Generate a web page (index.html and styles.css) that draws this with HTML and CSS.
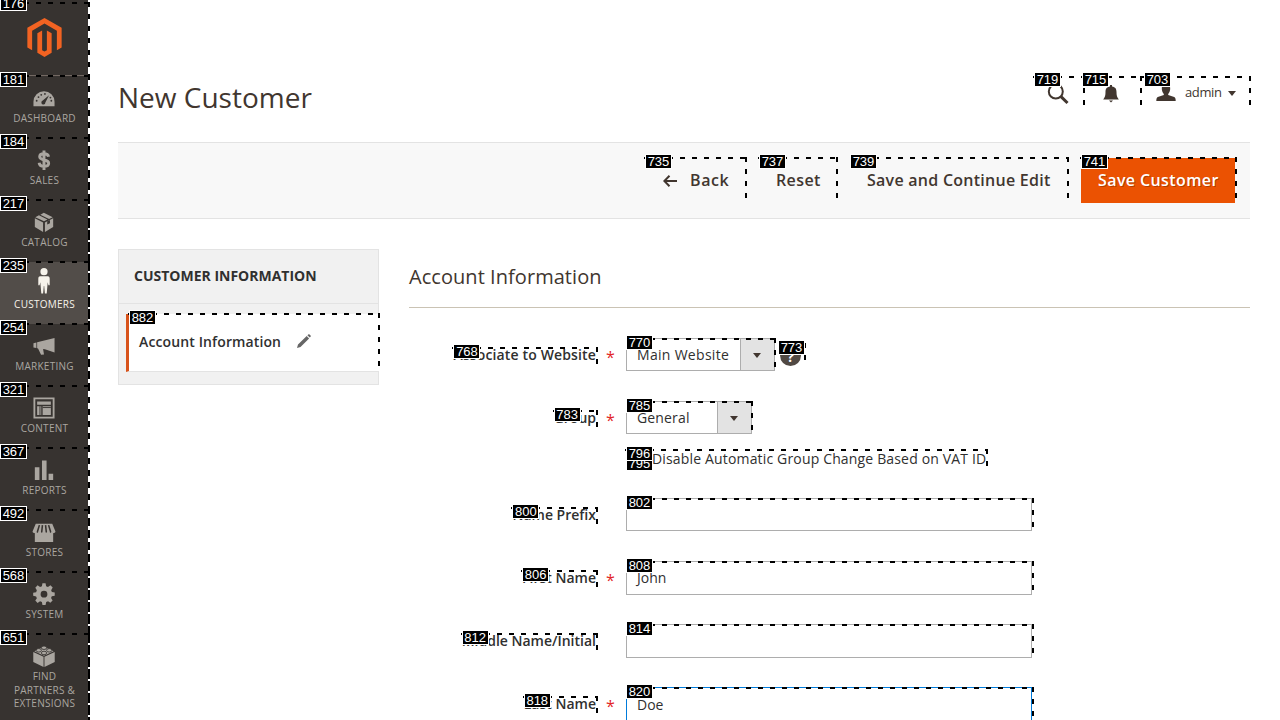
FILE: index.html
```html
<!DOCTYPE html>
<html lang="en">
<head>
<meta charset="utf-8">
<title>New Customer</title>
<link rel="stylesheet" href="styles.css">
</head>
<body>
<div class="page">
<nav class="sidebar mark">
  <span class="tag">176</span>
  <a class="logo"><svg width="35" height="40" viewBox="0 0 36 42"><path fill="#f26322" d="M18 0 36 10.3V30.900l-5 2.900V13.300L18 5.900 5 13.300v20.500L0 30.900V10.300zM10.500 16l5-2.800v20.600l2.500 1.400 2.500-1.400V13.200l5 2.800v20.500L18 41l-7.500-4.500z"/></svg></a>
  <a class="item first mark"><span class="tag">181</span>
    <svg viewBox="0 0 24 24"><path d="M.5 21V16a11.500 11.500 0 0 1 23 0v5z"/><g fill="#373330"><circle cx="4" cy="15" r="1"/><circle cx="6" cy="11" r="1"/><circle cx="9" cy="8.500" r="1"/><circle cx="13" cy="7.500" r="1"/><circle cx="20" cy="15" r="1"/><circle cx="19" cy="11.500" r="1"/><path d="M17.500 9 13.500 16.800a2.200 2.200 0 1 1-2.900-2z"/></g></svg>
    <span>Dashboard</span></a>
  <a class="item mark"><span class="tag">184</span>
    <svg viewBox="0 0 24 24"><path fill="none" stroke="currentColor" stroke-width="3.200" d="M17 8.500C16.500 6 14.500 5.200 12 5.200 9 5.200 7.300 6.300 7.300 8.500c0 4.700 9.800 2.300 9.800 7 0 2.200-2 3.400-5.100 3.400-3 0-5-1.300-5.300-3.900M12 1.500v21.500"/></svg>
    <span>Sales</span></a>
  <a class="item mark"><span class="tag">217</span>
    <svg viewBox="0 0 24 24"><path d="M2 8l9 4.500v10.500L2 17.500zM22 8l-9 4.500v10.500l9-5.500zM2.500 6.800 6.500 4.700l9.300 4.500L12 11.200zM8 4l3.800-2 9.700 4.800-4 1.900z"/><path fill="#373330" d="M15.500 11.300l3-1.500v3.500l-3 1.500z"/></svg>
    <span>Catalog</span></a>
  <a class="item active mark"><span class="tag">235</span>
    <svg class="person" viewBox="0 0 24 26"><circle cx="12" cy="3.700" r="3.600"/><path d="M8.300 8.200h7.400c1.700 0 2 1.200 2 2.700v6.300h-1.300l-.7-3-1 11.300h-1.800L12.200 18h-.4l-.7 7.500H9.300l-1-11.300-.7 3H6.300v-6.300c0-1.500.3-2.700 2-2.700z"/></svg>
    <span>Customers</span></a>
  <a class="item mark"><span class="tag">254</span>
    <svg viewBox="0 0 24 24"><path d="M.5 9l3.200-.8v6L.5 13.500zM4.500 8l19-4.800v15.800L13 15.500l-2-.3 1 6-3.200.3L5.500 14.700l-1-.3z"/></svg>
    <span>Marketing</span></a>
  <a class="item mark"><span class="tag">321</span>
    <svg viewBox="0 0 24 24"><path fill-rule="evenodd" d="M.5.500h23v23H.5zM2.500 2.500v19h19v-19zM4.500 4.800h15v3.700h-15zM4.500 10H9v9.500H4.500zM10.500 10h9v9.500h-9z"/><path stroke="#373330" d="M7.600 10v10M10.500 11.500h9"/></svg>
    <span>Content</span></a>
  <a class="item mark"><span class="tag">367</span>
    <svg viewBox="0 0 24 24"><path d="M2 9h5v14H2zM9.800 1.500h5V23h-5zM17 16h5v7h-5z"/></svg>
    <span>Reports</span></a>
  <a class="item mark"><span class="tag">492</span>
    <svg viewBox="0 0 24 24"><path d="M2 13h20v10H2zM3 3h18l3.500 8.500c0 2-4.300 2.500-5.200.5-.9 2-4.300 2-4.900 0-.6 2-4.200 2-4.800 0-.6 2-4 2-4.900 0-.9 2-5.200 1.500-5.200-.5z"/><path fill="none" stroke="#373330" stroke-width="1.700" d="M7 4.500 4.700 12M10.300 4.500 9.500 12M13.700 4.500l.8 7.500M17 4.500l2.300 7.500"/></svg>
    <span>Stores</span></a>
  <a class="item mark"><span class="tag">568</span>
    <svg viewBox="0 0 24 24"><path fill-rule="evenodd" d="M10.300.3h3.400l.6 3.200 2 .8L19 2.500l2.500 2.500-1.700 2.800.8 1.900 3.100.6v3.600l-3.200.6-.8 1.900 1.700 2.700-2.500 2.500-2.500-1.700-2 .8-.7 3.300h-3.400l-.6-3.200-2-.8L5 21.700l-2.500-2.500 1.700-2.700-.8-1.900-3.200-.6v-3.400l3.200-.6.8-2-1.700-2.700L5 2.500l2.700 1.800 2-.8zM12 8.500a3.700 3.700 0 1 0 0 7.400 3.700 3.700 0 0 0 0-7.400z"/></svg>
    <span>System</span></a>
  <a class="item last mark"><span class="tag">651</span>
    <svg viewBox="0 0 24 24"><path d="M.3 7.500l11.200 5.300V24L.3 18.500zM23.700 7.500l-11.200 5.300V24l11.200-5.500zM1.500 6.700l10.500-5 10.500 5L12 11.800z"/><g stroke="#373330" stroke-width=".9"><ellipse cx="12" cy="3" rx="2.900" ry="1.900"/><ellipse cx="6.300" cy="5.800" rx="2.900" ry="1.900"/><ellipse cx="17.700" cy="5.800" rx="2.900" ry="1.900"/><ellipse cx="12" cy="8.700" rx="2.900" ry="1.900"/></g></svg>
    <span>Find<br>Partners &amp;<br>Extensions</span></a>
</nav>
<main class="main">
  <header class="header">
    <h1>New Customer</h1>
    <div class="tools">
      <a class="tool search mark"><span class="tag">719</span><svg width="22" height="22" viewBox="0 0 22 22"><circle cx="8.800" cy="8.500" r="7" fill="none" stroke="#41362f" stroke-width="2"/><path stroke="#41362f" stroke-width="3" d="M14 13.700 20.500 20"/></svg></a>
      <a class="tool bell mark"><span class="tag">715</span><svg width="16" height="18" viewBox="0 0 16 18"><path fill="#41362f" d="M7 0h2v1.500c3.500.5 4.500 2.500 4.500 5.500 0 3.500.5 5 2.300 7.500H.2C2 12 2.500 10.500 2.500 7c0-3 1-5 4.500-5.500zM6 15.500h4L8 17.500z"/></svg></a>
      <a class="tool user mark"><span class="tag">703</span><svg width="20" height="18" viewBox="0 0 20 18"><path fill="#41362f" d="M10 0c3 0 4.500 2 4.200 5-.2 2.300-1 4-2 5v1l6 2c1 .4 1.500 1.500 1.500 4H.3c0-2.500.5-3.600 1.500-4l6-2V10c-1-1-1.800-2.700-2-5C5.500 2 7 0 10 0z"/></svg><span class="name">admin</span><i class="caret"></i></a>
    </div>
  </header>
  <div class="actions">
    <a class="btn back mark"><span class="tag">735</span><svg width="14" height="12" viewBox="0 0 14 12"><path fill="none" stroke="#41362f" stroke-width="2" d="M14 6H1.500M6.500.8 1.300 6l5.200 5.200"/></svg>Back</a>
    <a class="btn reset mark"><span class="tag">737</span>Reset</a>
    <a class="btn cont mark"><span class="tag">739</span>Save and Continue Edit</a>
    <a class="btn primary mark"><span class="tag">741</span>Save Customer</a>
  </div>
  <div class="columns">
    <aside class="panel">
      <h2>CUSTOMER INFORMATION</h2>
      <a class="tab mark"><span class="tag">882</span>Account Information
        <svg width="14" height="14" viewBox="0 0 14 14"><path fill="#666" d="M0 14l1-3.500L9.700 2l2.400 2.400L3.500 13zM10.400 1.300l.9-.9c.4-.3.900-.3 1.200 0l1.100 1.100c.3.400.3.800 0 1.200l-.9.9z"/></svg></a>
    </aside>
    <section class="form">
      <h2>Account Information</h2>
      <div class="field"><div class="label"><span class="mark wide">Associate to Website<span class="tag">768</span></span></div><b class="req">*</b>
        <div class="select site mark"><span class="tag">770</span><span class="value">Main Website</span><span class="drop"><i class="caret"></i></span></div>
        <div class="help mark"><span class="tag">773</span><i>?</i></div></div>
      <div class="field"><div class="label"><span class="mark">Group<span class="tag">783</span></span></div><b class="req">*</b>
        <div class="select group mark"><span class="tag">785</span><span class="value">General</span><span class="drop"><i class="caret"></i></span></div></div>
      <div class="check"><span class="tag under">795</span><div class="checklabel mark"><span class="tag">796</span>Disable Automatic Group Change Based on VAT ID</div></div>
      <div class="field"><div class="label"><span class="mark">Name Prefix<span class="tag">800</span></span></div><b class="req"></b><div class="input mark"><span class="tag">802</span></div></div>
      <div class="field"><div class="label"><span class="mark">First Name<span class="tag">806</span></span></div><b class="req">*</b><div class="input tall mark"><span class="tag">808</span>John</div></div>
      <div class="field"><div class="label"><span class="mark">Middle Name/Initial<span class="tag">812</span></span></div><b class="req"></b><div class="input tall mark"><span class="tag">814</span></div></div>
      <div class="field"><div class="label"><span class="mark">Last Name<span class="tag">818</span></span></div><b class="req">*</b><div class="input tall focus mark"><span class="tag">820</span>Doe</div></div>
    </section>
  </div>
</main>
</div>
</body>
</html>
```
FILE: styles.css
```css
* { box-sizing: border-box; }
body { margin: 0; height: 720px; overflow: hidden; background: #fff; color: #41362f; font: 14px/19px "Open Sans", sans-serif; }
h1, h2 { margin: 0; font-weight: 400; }
i { font-style: normal; }
svg { display: block; flex: none; }
.page { display: flex; height: 720px; overflow: hidden; }

/* numbered hint marks: dashed top and right edges with a tag in the corner */
.mark { position: relative; }
.mark::before {
  content: ""; position: absolute; z-index: 2; inset: -1px -2px 0 -1px; pointer-events: none;
  background:
    repeating-linear-gradient(to right, #000 0 5px, transparent 5px 12px) 0 0 / 100% 2px no-repeat,
    repeating-linear-gradient(to bottom, #000 0 5px, transparent 5px 12px) 100% 0 / 2px 100% no-repeat;
}
.tag {
  position: absolute; z-index: 3; left: 0; top: -4px; width: 27px; height: 15px;
  border: 1px solid #fff; background: #000; color: #fff; text-align: center; text-shadow: none; white-space: nowrap;
  font: 400 13px/13px "Liberation Sans", sans-serif; letter-spacing: 0;
}

.sidebar { width: 88px; flex: none; background: #373330; color: #aaa6a0; }
.sidebar::before { inset: 2px -2px 0 0; }
.logo { display: flex; justify-content: center; height: 76px; padding: 18px 0 0 1px; border-bottom: 1px solid #736963; }
.item { display: flex; flex-direction: column; align-items: center; height: 62px; padding: 11px 0 0; text-transform: uppercase; text-align: center; font-size: 10px; line-height: 13.500px; letter-spacing: .25px; }
.item svg { width: 24px; height: 22px; fill: currentColor; margin-bottom: 3px; }
.item svg.person { height: 26px; margin: -5px 0 4px; }
.item > span:last-child { padding-left: 1px; }
.item::before { inset: -1px -2px 0 0; }
.item.active { background: #524d49; color: #f7f3eb; }
.item.last { height: 86px; }
.sidebar .tag { left: 0; top: -4px; height: 15px; line-height: 13px; }

.main { width: 1132px; margin-left: 30px; flex: none; }
.header { display: flex; justify-content: space-between; height: 142px; padding-top: 77px; }
h1 { font-size: 28px; line-height: 42px; margin-top: -1px; }
.tools { display: flex; }
.tool { display: flex; height: 28px; }
.search { width: 49px; padding: 6px 0 0 13px; margin-right: 1px; }
.bell { width: 56px; padding: 8px 0 0 19px; margin-right: 2px; }
.user { width: 108px; padding: 7px 0 0 14px; }
.user::before { right: -1px; }
.search .tag { left: 0; top: -5px; }
.bell .tag { left: -2px; top: -5px; }
.user .tag { left: 2px; top: -5px; }
.name { font-size: 13px; line-height: 17px; margin: 0 7px 0 9px; letter-spacing: -.4px; }
.caret { width: 0; height: 0; border: 4px solid transparent; border-top: 5px solid #41362f; border-bottom: 0; }
.user .caret { margin-top: 7px; }

.actions { display: flex; justify-content: flex-end; height: 77px; padding: 15px 15px 0 0; background: #f8f8f8; border-top: 1px solid #e3e3e3; border-bottom: 1px solid #e3e3e3; }
.btn { display: flex; align-items: center; height: 45px; font-size: 16px; font-weight: 600; letter-spacing: .4px; white-space: nowrap; }
.back { width: 101px; padding-left: 18px; height: 41px; padding-top: 4px; letter-spacing: .6px; }
.back svg { margin-right: 13px; }
.reset { width: 78px; margin-left: 13px; padding: 4px 0 0 17px; height: 41px; }
.cont { width: 217px; margin-left: 14px; padding: 4px 0 0 16px; height: 41px; letter-spacing: .26px; }
.back::before, .reset::before, .cont::before { right: -1px; }
.primary { width: 154px; margin-left: 13px; padding-left: 17px; background: #eb5202; color: #fff; text-shadow: 1px 1px 0 rgba(0,0,0,.25); }
.btn .tag { left: 0; }
.cont .tag { left: -1px; }

.columns { display: flex; padding-top: 30px; }
.panel { width: 261px; height: 136px; flex: none; background: #f1f1f1; border: 1px solid #e3e3e3; }
.panel h2 { height: 54px; padding: 16px 0 0 15px; border-bottom: 1px solid #e3e3e3; font-size: 14px; font-weight: 700; color: #303030; }
.tab { display: flex; gap: 16px; height: 58px; margin: 10px -1px 0 7px; padding: 18px 0 0 10px; background: #fff; border-left: 3px solid #d8531b; border-bottom: 1px solid #e3e3e3; color: #303030; font-weight: 600; letter-spacing: .12px; }
.tab::before { right: -1px; }
.tab svg { margin-top: 2px; }
.tab .tag { left: 0; }

.form { width: 841px; margin-left: 30px; }
.form > h2 { height: 59px; padding-top: 14px; border-bottom: 1px solid #cac3b4; font-size: 20px; line-height: 28px; letter-spacing: .05px; margin-bottom: 30px; }
.field { display: flex; height: 33px; margin-bottom: 30px; }
.label { width: 187px; padding-top: 10px; text-align: right; font-weight: 600; line-height: 13px; }
.label .mark { display: inline-block; height: 16px; color: #303030; }
.label .wide { letter-spacing: .14px; }
.req { width: 30px; padding: 10px 0 0 10px; color: #e22626; font-weight: 400; font-size: 16px; }
.select { display: flex; height: 33px; border: 1px solid #adadad; color: #303030; }
.value { flex: 1; padding: 6px 0 0 10px; letter-spacing: .3px; white-space: nowrap; }
.group .value { letter-spacing: .15px; }
.select .tag, .input .tag { left: -1px; }
.drop { display: flex; width: 34px; align-items: center; justify-content: center; background: #e3e3e3; border-left: 1px solid #adadad; }
.drop .caret { margin: 1px 1px 0 0; }
.site { width: 149px; }
.group { width: 126px; }
.help { width: 25px; height: 18px; margin: 6px 0 0 4px; }
.help .tag { left: -1px; }
.help i { display: block; width: 21px; height: 21px; margin: 1px 0 0 1px; border-radius: 50%; background: #514943; color: #fff; text-align: center; font-weight: 700; line-height: 23px; }
.check { position: relative; display: flex; height: 20px; margin: -14px 0 28px 217px; }
.check .tag { left: 0; }
.check .under { top: 6px; }
.checklabel { padding-left: 26px; width: 360px; color: #303030; line-height: 18px; letter-spacing: .16px; white-space: nowrap; }
.input { width: 406px; height: 33px; flex: none; padding: 6px 10px; border: 1px solid #adadad; color: #303030; }
.input::before { right: -3px; }
.tall { height: 34px; }
.focus { border-color: #007bdb; padding-top: 7px; }
```
